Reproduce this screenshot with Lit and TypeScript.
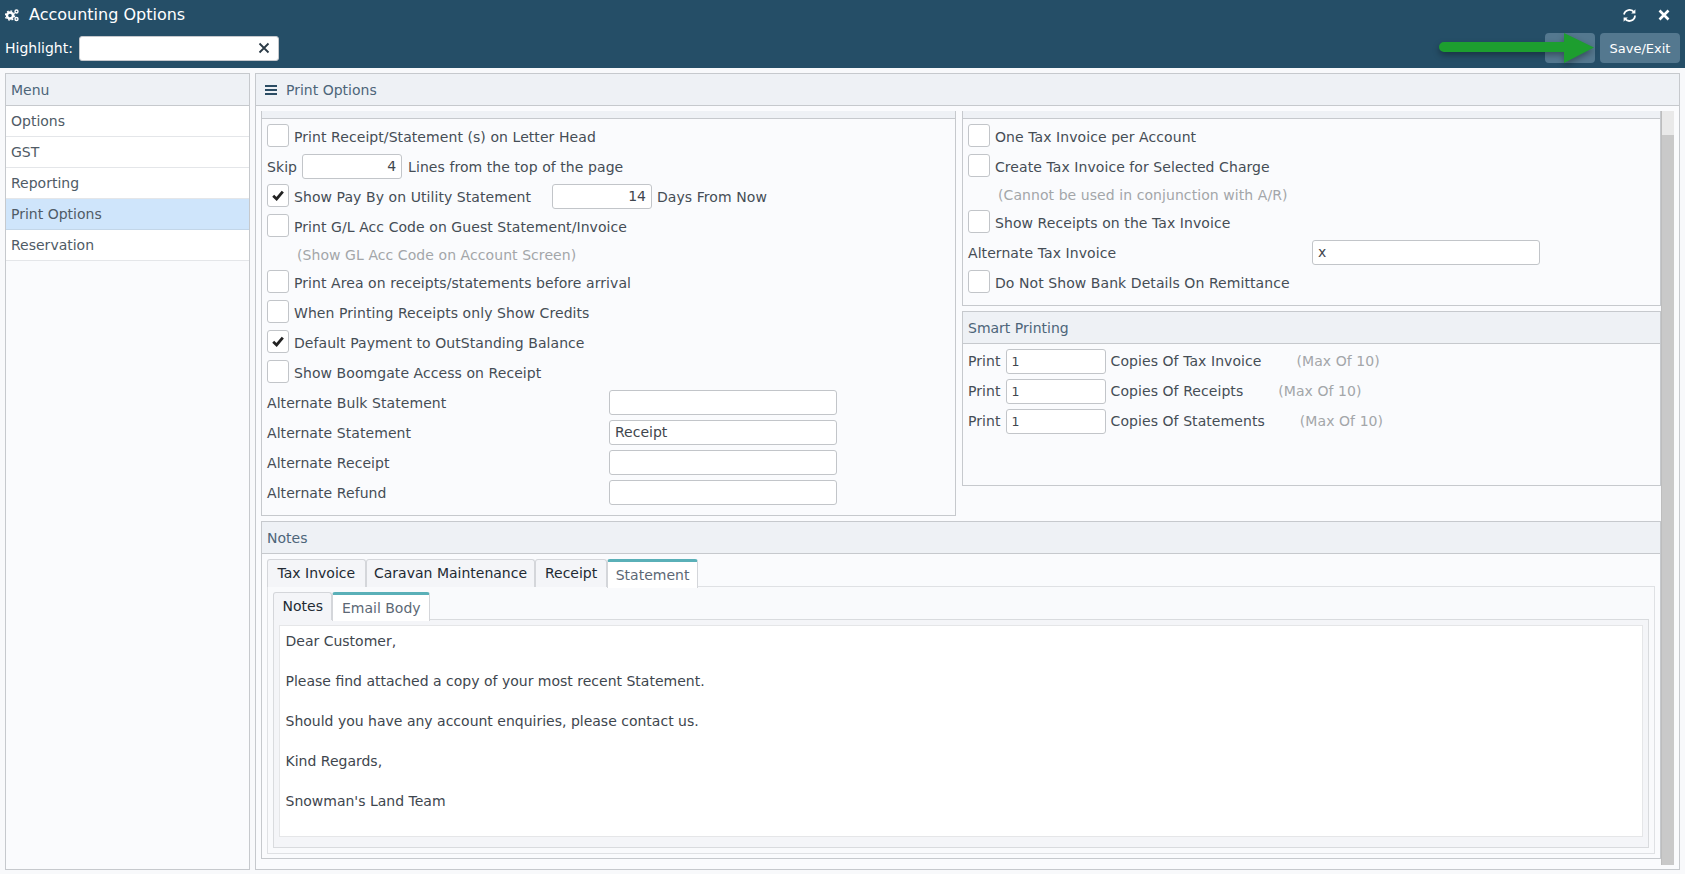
import { LitElement, html, css } from "lit";
import { customElement } from "lit/decorators.js";

@customElement("app-root")
export class AppRoot extends LitElement {
  static styles = css`
    :host { display: block; height: 874px; width: 1685px; overflow: hidden; background: #f8f9fb; font-family: "DejaVu Sans", Verdana, sans-serif; font-size: 14px; color: #454d55; position: relative; }
    * { box-sizing: border-box; }
    .header { height: 68px; background: #254e67; padding: 5px; display: flex; flex-direction: column; color: #fff; }
    .top { display: flex; align-items: center; height: 20px; }
    .top .title { font-size: 16px; margin-left: 10px; flex: 1; line-height: 20px; }
    .top .tools { display: flex; gap: 21px; margin-right: 10px; align-items: center; }
    .bar { display: flex; align-items: center; margin-top: 8px; height: 30px; }
    .bar label { font-size: 14px; margin-right: 6px; }
    .hl { width: 200px; height: 25px; background: #fff; border: 1px solid #c5c8cc; border-radius: 3px; display: flex; align-items: center; justify-content: flex-end; padding-right: 8px; }
    .spacer { flex: 1; }
    .btn { height: 30px; background: #54788f; border-radius: 4px; color: #fff; font-size: 13px; display: flex; align-items: center; justify-content: center; }
    .btn.blank { width: 50px; margin-right: 5px; }
    .btn.save { width: 80px; }
    .arrow { position: absolute; left: 1436px; top: 28px; filter: drop-shadow(0 3px 3px rgba(0,0,0,.35)); }

    .body { display: flex; gap: 5px; padding: 5px 5px 4px 5px; height: 806px; }
    .panel { border: 1px solid #c6c9cd; background: #fafbfd; }
    .phead { height: 32px; background: #eef1f5; border-bottom: 1px solid #c6c9cd; display: flex; align-items: center; padding-left: 5px; color: #4d6579; font-size: 14px; flex: none; }
    .menu { width: 245px; flex: none; }
    .item { height: 31px; padding-left: 5px; display: flex; align-items: center; background: #fff; border-bottom: 1px solid #e4e6e9; color: #4f5b66; }
    .item.active { background: #cfe5fb; border-bottom-color: #c3d6e8; }
    .main { flex: 1; display: flex; flex-direction: column; min-width: 0; }
    .mainhead { padding-left: 9px; gap: 9px; }
    .burger { width: 12px; height: 10px; border-top: 2px solid #2b4c63; border-bottom: 2px solid #2b4c63; position: relative; }
    .burger::after { content: ""; position: absolute; left: 0; right: 0; top: 2px; height: 2px; background: #2b4c63; }
    .scroll { flex: 1; display: flex; padding: 5px 5px 4px 5px; min-height: 0; }
    .content { width: 1400px; flex: none; display: flex; flex-direction: column; }
    .sb { width: 13px; background: #c9c9c9; border-left: 1px solid #bdbdbd; height: 100%; }
    .sb::before { content: ""; display: block; height: 24px; background: #e9e9e9; }
    .cols { display: flex; gap: 6px; }
    .left { width: 695px; height: 405px; flex: none; border: 1px solid #c6c9cd; border-top: none; }
    .right { width: 699px; flex: none; display: flex; flex-direction: column; gap: 5px; }
    .strip { height: 8px; background: #eef1f5; border-bottom: 1px solid #c6c9cd; }
    .rtop { height: 195px; border: 1px solid #c6c9cd; border-top: none; }
    .rows { padding: 5px 5px 0 5px; letter-spacing: .07px; }
    .row { height: 30px; display: flex; align-items: flex-start; white-space: nowrap; }
    .row > span { line-height: 27px; }
    .smart .row > span { line-height: 25px; }
    .hint { color: #a3a6a9; height: 26px; line-height: 22px; padding-left: 30px; }
    .cb { width: 22px; height: 23px; flex: none; border: 1px solid #c2c5c9; border-radius: 3px; background: #fff; margin-right: 5px; display: flex; align-items: center; justify-content: center; }
    input { height: 25px; border: 1px solid #c2c5c9; border-radius: 3px; background: #fff; font: 14px "DejaVu Sans", sans-serif; color: #3f464d; padding: 0 5px 1px; outline: none; flex: none; }
    .num { text-align: right; padding-right: 5px; width: 100px; }
    .skip { margin: 0 6px 0 5px; }
    .pay { margin-right: 5px; }
    .payl { width: 258px; }
    .alt { width: 228px; }
    .smart { height: 175px; border: 1px solid #c6c9cd; }
    input.copies { width: 100px; padding-left: 5px; font-size: 12.5px; margin: 0 5px; }
    .max { color: #a3a6a9; margin-left: 35px; }

    .notes { margin-top: 5px; height: 338px; border: 1px solid #c6c9cd; width: 1400px; }
    .tabwrap { padding: 5px; height: 305px; display: flex; flex-direction: column; }
    .tabs { display: flex; height: 28px; flex: none; position: relative; z-index: 1; }
    .tab { border: 1px solid #d4d6da; border-bottom: none; border-radius: 3px 3px 0 0; background: #f4f5f8; padding: 0 8.5px 2px; display: flex; align-items: center; color: #222a33; }
    .tab.on { background: #fff; border-top: 3px solid #5ab0b8; color: #5c6875; padding-top: 0; padding-bottom: 0; height: 29px; }
    .tabs.outer .tab:nth-child(1) { padding-left: 9.5px; padding-right: 9.5px; }
    .tabs.outer .tab:nth-child(2) { padding-left: 7.4px; padding-right: 7.4px; }
    .tabs.outer .tab:nth-child(4) { padding-left: 8px; padding-right: 8px; }
    .box { flex: 1; border: 1px solid #dfe1e4; background: #f9fafc; padding: 5px; display: flex; flex-direction: column; margin-top: -1px; }
    .box2 { background: #f4f5f8; padding: 5px 5px 10px; flex: 1; border: 1px solid #d9dbde; margin-top: -1px; display: flex; }
    .ta { flex: 1; background: #fff; border: 1px solid #e5e6e8; padding: 5px 5.5px; color: #3e464e; }
    .ta div { height: 40px; line-height: 20px; }
  `;

  private cb(on = false) {
    return html`<div class="cb">${on ? html`<svg width="12" height="11" viewBox="0 0 12 11"><path d="M1.2 5.8 L4.6 9 L10.8 1.6" fill="none" stroke="#222" stroke-width="2.8"/></svg>` : ""}</div>`;
  }

  private alt(label: string, value: string, w: number) {
    return html`<div class="row"><span style="width:${w}px">${label}</span><input class="alt" .value=${value} /></div>`;
  }

  render() {
    const check = (t: string, on = false) => html`<div class="row">${this.cb(on)}<span>${t}</span></div>`;
    const copies = (t: string) => html`<div class="row"><span>Print</span><input class="copies" .value=${"1"} /><span>${t}</span><span class="max">(Max Of 10)</span></div>`;
    return html`
      <div class="header">
        <div class="top">
          <svg width="14" height="14" viewBox="0 0 14 14">
            <circle cx="5" cy="7.5" r="3" fill="none" stroke="#fff" stroke-width="2.4"/>
            <circle cx="5" cy="7.5" r="4.6" fill="none" stroke="#fff" stroke-width="1.4" stroke-dasharray="1.8 1.8"/>
            <circle cx="11.5" cy="3.5" r="1.5" fill="none" stroke="#fff" stroke-width="1.4"/>
            <circle cx="11.5" cy="11" r="1.5" fill="none" stroke="#fff" stroke-width="1.4"/>
          </svg>
          <span class="title">Accounting Options</span>
          <div class="tools">
            <svg width="15" height="15" viewBox="0 0 15 15" fill="none" stroke="#fff" stroke-width="1.8">
              <path d="M2 6.5 A5.6 5.6 0 0 1 12.2 4.5"/><path d="M13 7.5 A5.6 5.6 0 0 1 2.8 10.5"/>
              <path d="M13.4 1.2 V5.4 H9.2 Z" fill="#fff" stroke="none"/><path d="M1.6 13.8 V9.6 H5.8 Z" fill="#fff" stroke="none"/>
            </svg>
            <svg width="12" height="12" viewBox="0 0 12 12"><path d="M1.5 1.5 L10.5 10.5 M10.5 1.5 L1.5 10.5" stroke="#fff" stroke-width="2.6"/></svg>
          </div>
        </div>
        <div class="bar">
          <label>Highlight:</label>
          <div class="hl"><svg width="12" height="12" viewBox="0 0 12 12"><path d="M1.5 1.5 L10.5 10.5 M10.5 1.5 L1.5 10.5" stroke="#2b3a46" stroke-width="1.8"/></svg></div>
          <div class="spacer"></div>
          <div class="btn blank"></div>
          <div class="btn save">Save/Exit</div>
        </div>
      </div>
      <svg class="arrow" width="165" height="42" viewBox="0 0 165 42"><path d="M8 14 H128 V5 L158 19.5 L128 35 V24 H8 A5 5 0 0 1 8 14 Z" fill="#1d9e2f"/></svg>
      <div class="body">
        <div class="panel menu">
          <div class="phead">Menu</div>
          <div class="item">Options</div>
          <div class="item">GST</div>
          <div class="item">Reporting</div>
          <div class="item active">Print Options</div>
          <div class="item">Reservation</div>
        </div>
        <div class="panel main">
          <div class="phead mainhead"><div class="burger"></div><span>Print Options</span></div>
          <div class="scroll">
            <div class="content">
              <div class="cols">
                <div class="left">
                  <div class="strip"></div>
                  <div class="rows">
                    ${check("Print Receipt/Statement (s) on Letter Head")}
                    <div class="row"><span>Skip</span><input class="num skip" .value=${"4"} /><span>Lines from the top of the page</span></div>
                    <div class="row">${this.cb(true)}<span class="payl">Show Pay By on Utility Statement</span><input class="num pay" .value=${"14"} /><span>Days From Now</span></div>
                    ${check("Print G/L Acc Code on Guest Statement/Invoice")}
                    <div class="hint">(Show GL Acc Code on Account Screen)</div>
                    ${check("Print Area on receipts/statements before arrival")}
                    ${check("When Printing Receipts only Show Credits")}
                    ${check("Default Payment to OutStanding Balance", true)}
                    ${check("Show Boomgate Access on Receipt")}
                    ${this.alt("Alternate Bulk Statement", "", 342)}
                    ${this.alt("Alternate Statement", "Receipt", 342)}
                    ${this.alt("Alternate Receipt", "", 342)}
                    ${this.alt("Alternate Refund", "", 342)}
                  </div>
                </div>
                <div class="right">
                  <div class="rtop">
                    <div class="strip"></div>
                    <div class="rows">
                      ${check("One Tax Invoice per Account")}
                      ${check("Create Tax Invoice for Selected Charge")}
                      <div class="hint">(Cannot be used in conjunction with A/R)</div>
                      ${check("Show Receipts on the Tax Invoice")}
                      ${this.alt("Alternate Tax Invoice", "x", 344)}
                      ${check("Do Not Show Bank Details On Remittance")}
                    </div>
                  </div>
                  <div class="smart">
                    <div class="phead">Smart Printing</div>
                    <div class="rows">
                      ${copies("Copies Of Tax Invoice")}
                      ${copies("Copies Of Receipts")}
                      ${copies("Copies Of Statements")}
                    </div>
                  </div>
                </div>
              </div>
              <div class="notes">
                <div class="phead">Notes</div>
                <div class="tabwrap">
                  <div class="tabs outer">
                    <div class="tab">Tax Invoice</div>
                    <div class="tab">Caravan Maintenance</div>
                    <div class="tab">Receipt</div>
                    <div class="tab on">Statement</div>
                  </div>
                  <div class="box">
                    <div class="tabs">
                      <div class="tab">Notes</div>
                      <div class="tab on">Email Body</div>
                    </div>
                    <div class="box2">
                      <div class="ta">
                        <div>Dear Customer,</div>
                        <div>Please find attached a copy of your most recent Statement.</div>
                        <div>Should you have any account enquiries, please contact us.</div>
                        <div>Kind Regards,</div>
                        <div>Snowman's Land Team</div>
                      </div>
                    </div>
                  </div>
                </div>
              </div>
            </div>
            <div class="sb"></div>
          </div>
        </div>
      </div>
    `;
  }
}
